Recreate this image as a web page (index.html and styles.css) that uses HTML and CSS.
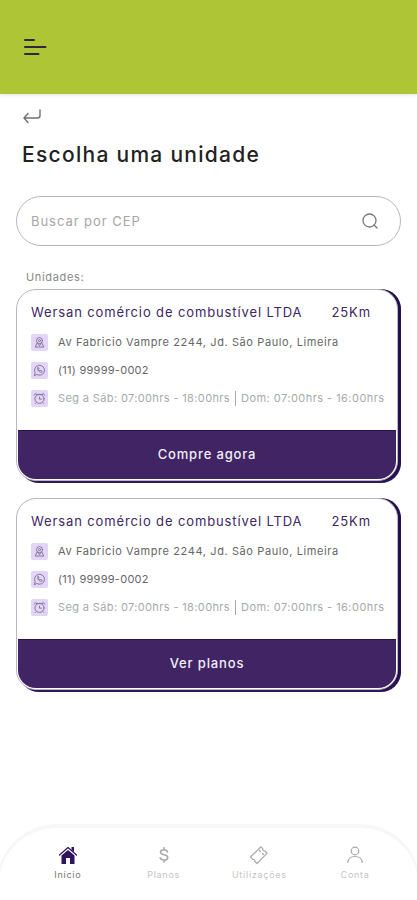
FILE: index.html
```html
<!DOCTYPE html>
<html lang="pt-BR">
<head>
    <meta charset="UTF-8">
    <meta name="viewport" content="width=device-width, initial-scale=1">
    <title>Escolha uma unidade</title>
    <link rel="stylesheet" href="styles.css">
</head>
<body>
    <svg class="sprite">
        <symbol id="pin" viewBox="0 0 18 18">
            <circle cx="9" cy="7" r="3.2"/>
            <circle cx="9" cy="7" r="1.1"/>
            <path d="M7.2 9.8L9 12.5l1.8-2.7M6.2 10L4.5 13.8h9L11.8 10"/>
        </symbol>
        <symbol id="whats" viewBox="0 0 18 18">
            <path d="M3.6 14.2l.8-2.8a5.3 5.3 0 1 1 2 2z"/>
            <path d="M7 6.4c-.9 1.9 2.3 5.3 4.4 4.4l.4-1-1.5-.9-.7.7c-.8-.4-1.3-.9-1.6-1.6l.6-.7-.8-1.4z"/>
        </symbol>
        <symbol id="clock" viewBox="0 0 18 18">
            <path d="M3.2 5.4l2.2-1.8M14.8 5.4l-2.2-1.8M5.8 4.8h6.4M5.4 13.4l-.9.9M12.6 13.4l.9.9"/>
            <circle cx="9" cy="9.4" r="4.8"/>
            <path d="M9 7.5v2.2h2"/>
        </symbol>
    </svg>
    <header class="header">
        <svg class="menu" width="24" height="18" viewBox="0 0 24 18">
            <path d="M2 2h9M2 9h20.500M2 16h13.500"/>
        </svg>
    </header>
    <main class="main">
        <svg class="back" width="20" height="16" viewBox="0 0 20 16">
            <path d="M17 1v5.500q0 2.500-2.500 2.500H1.500M5 4.500L1 9l4 4.500"/>
        </svg>
        <h1 class="title">Escolha uma unidade</h1>
        <div class="search">
            <span class="search-text">Buscar por CEP</span>
            <svg width="18" height="18" viewBox="0 0 18 18">
                <circle cx="8.500" cy="8.500" r="6.500"/>
                <path d="M13 13l3 3"/>
            </svg>
        </div>
        <p class="label">Unidades:</p>
        <section class="card">
            <div class="info">
                <div class="top">
                    <h2 class="name">Wersan comércio de combustível LTDA</h2>
                    <span class="km">25Km</span>
                </div>
                <div class="row"><svg class="ico"><use href="#pin"/></svg><span class="address">Av Fabricio Vampre 2244, Jd. São Paulo, Limeira</span></div>
                <div class="row"><svg class="ico"><use href="#whats"/></svg><span class="phone">(11) 99999-0002</span></div>
                <div class="row hours"><svg class="ico"><use href="#clock"/></svg><span class="week">Seg a Sáb: 07:00hrs - 18:00hrs</span><span class="sunday">Dom: 07:00hrs - 16:00hrs</span></div>
            </div>
            <button class="btn">Compre agora</button>
        </section>
        <section class="card">
            <div class="info">
                <div class="top">
                    <h2 class="name">Wersan comércio de combustível LTDA</h2>
                    <span class="km">25Km</span>
                </div>
                <div class="row"><svg class="ico"><use href="#pin"/></svg><span class="address">Av Fabricio Vampre 2244, Jd. São Paulo, Limeira</span></div>
                <div class="row"><svg class="ico"><use href="#whats"/></svg><span class="phone">(11) 99999-0002</span></div>
                <div class="row hours"><svg class="ico"><use href="#clock"/></svg><span class="week">Seg a Sáb: 07:00hrs - 18:00hrs</span><span class="sunday">Dom: 07:00hrs - 16:00hrs</span></div>
            </div>
            <button class="btn">Ver planos</button>
        </section>
    </main>
    <nav class="tabs">
        <a class="tab active">
            <svg width="20" height="20" viewBox="0 0 20 20">
                <path class="fill" d="M3.500 10.500L10 5l6.500 5.500V19H12v-6H8v6H3.500zM13.500 2H16v5l-2.500-2z"/>
                <path d="M1.500 10L10 2.500l8.500 7.500"/>
            </svg>
            <span>Início</span>
        </a>
        <a class="tab">
            <svg class="money" width="20" height="20" viewBox="0 0 20 20">
                <path d="M13.500 7C13 5.300 11.800 4.800 10 4.800c-2 0-3.500.8-3.500 2.400 0 3.400 7.200 1.800 7.200 5.200 0 1.800-1.600 2.700-3.700 2.700s-3.500-.8-3.800-2.400M10 2.800v2M10 15.100v2"/>
            </svg>
            <span>Planos</span>
        </a>
        <a class="tab">
            <svg width="20" height="20" viewBox="0 0 20 20">
                <path d="M1.500 12L12 1.800l2 2q-.7 2.200 1.700 2l2.500 2.400L8 18.500l-2.300-2.200q.4-2.200-2-2z"/>
                <path d="M10.500 5.500l1 1M13.500 8.500l1 1"/>
            </svg>
            <span>Utilizações</span>
        </a>
        <a class="tab">
            <svg width="20" height="20" viewBox="0 0 20 20">
                <circle cx="10" cy="6" r="3.800"/>
                <path d="M2.800 17.500c.3-4 3-6 7.200-6s6.900 2 7.200 6"/>
            </svg>
            <span>Conta</span>
        </a>
    </nav>
</body>
</html>
```
FILE: styles.css
```css
*{
    padding: 0;
    margin: 0;
    box-sizing: border-box;
}
body{
    height: 900px;
    display: flex;
    flex-direction: column;
    overflow: hidden;
    background: #fff;
    font-family: Inter, "Open Sans", sans-serif;
    white-space: nowrap;
}
svg{
    display: block;
    flex: none;
    fill: none;
    stroke-linecap: round;
    stroke-linejoin: round;
}
.sprite{
    width: 0;
    height: 0;
}
.header{
    height: 94px;
    padding: 38px 23px;
    background: #aec636;
    box-shadow: 0 1px 4px rgba(0,0,0,.12);
}
.menu{
    stroke: #30263f;
    stroke-width: 2;
}
.main{
    flex: 1;
    padding: 15px 16px 0;
}
.back{
    margin-left: 7px;
    stroke: #707070;
    stroke-width: 1.4;
}
.title{
    margin: 16px 0 0 6px;
    font-size: 21px;
    line-height: 28px;
    font-weight: 500;
    letter-spacing: 1.28px;
    color: #222;
}
.search{
    height: 50px;
    margin-top: 27px;
    padding: 0 21px 0 14px;
    display: flex;
    align-items: center;
    justify-content: space-between;
    border: 1px solid #b8b8b8;
    border-radius: 25px;
}
.search svg{
    stroke: #777;
    stroke-width: 1.3;
}
.search-text{
    font-size: 13px;
    letter-spacing: .95px;
    color: #a6a6a6;
}
.label{
    margin: 23px 0 4px 10px;
    font-size: 11px;
    line-height: 16px;
    letter-spacing: .65px;
    color: #888;
}
.card{
    height: 192px;
    margin: 0 3px 17px 0;
    padding: 0 1px 1px;
    display: flex;
    flex-direction: column;
    border: 1px solid #b9b5c3;
    border-radius: 20px;
    background: #fff;
    box-shadow: 3px 0 0 #25104f, 3px 2px 0 #311959;
}
.info{
    height: 140px;
    padding: 12px 13px 0;
}
.top{
    display: flex;
    justify-content: space-between;
    padding-right: 12px;
    line-height: 20px;
    color: #3d2762;
}
.name,.km{
    font-size: 13px;
    font-weight: 400;
    letter-spacing: .88px;
}
.row{
    height: 28px;
    display: flex;
    align-items: center;
    font-size: 11px;
    color: #666;
}
.top + .row{
    margin-top: 6px;
}
.ico{
    width: 17px;
    height: 17px;
    margin-right: 10px;
    border-radius: 2px;
    background: #e2d5f5;
    stroke: #84709b;
    stroke-width: 1;
}
.address{
    letter-spacing: .6px;
}
.phone{
    letter-spacing: .27px;
}
.hours{
    letter-spacing: .37px;
    color: #a5aaab;
}
.sunday{
    margin-left: 5px;
    padding-left: 5px;
    border-left: 1px solid #a5aaab;
    line-height: 15px;
    letter-spacing: .46px;
}
.btn{
    flex: 1;
    padding-bottom: 2px;
    border: 0;
    border-top: 1px solid #28104f;
    border-radius: 0 0 18px 18px;
    background: #402463;
    color: #f2eef7;
    font: 500 13px Inter, sans-serif;
    letter-spacing: .85px;
}
.tabs{
    height: 76px;
    margin: 0 -3px;
    padding: 17px 15px 0 21px;
    display: flex;
    border-top: 4px solid #f7f7f7;
    border-left: 2px solid #f7f7f7;
    border-right: 2px solid #f7f7f7;
    border-radius: 60px 60px 0 0;
}
.tab{
    flex: 1;
    display: flex;
    flex-direction: column;
    align-items: center;
    gap: 4px;
    font-size: 9px;
    line-height: 12px;
    letter-spacing: .75px;
    color: #c4c4c4;
    stroke: #aaa;
    stroke-width: 1.2;
}
.tab span{
    stroke: none;
}
.tab .money{
    stroke-width: 1.6;
}
.active{
    color: #777;
    stroke: #301460;
}
.active .fill{
    fill: #301460;
    stroke: none;
}
```
